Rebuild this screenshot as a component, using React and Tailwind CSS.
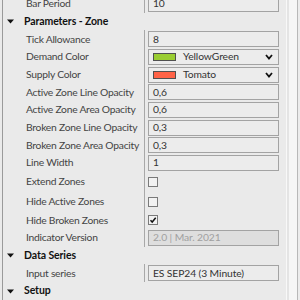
import React from "react";

const font = { fontFamily: 'Lato, "Noto Sans", sans-serif' };

function Tri() {
  return (
    <svg width="7" height="5" viewBox="0 0 7 5" className="shrink-0">
      <path d="M0 0.5 L7 0.5 L3.5 4.5 Z" fill="#111" />
    </svg>
  );
}

function Header({ label, h = "h-[18px]" }) {
  return (
    <div className={`flex items-center ${h} pl-[4px] gap-[10px]`}>
      <Tri />
      <span className="text-[10.5px] font-bold text-[#111] tracking-[-0.1px]">{label}</span>
    </div>
  );
}

function Row({ label, children, h = "h-[18px]", sep = true }) {
  return (
    <div className={`flex ${h}`}>
      <div className="w-[141px] shrink-0 flex items-center pl-[23px] text-[10.3px] tracking-[-0.25px] text-[#444] whitespace-nowrap">
        {label}
      </div>
      <div className={`flex-1 flex items-center pl-[3px] pr-[7px] ${sep ? "border-l border-[#a8a8a8]" : ""}`}>
        {children}
      </div>
    </div>
  );
}

function Box({ children, disabled }) {
  return (
    <div
      className={`w-[131px] h-[16px] border border-[#a3a3a3] flex items-center pl-[4px] text-[10.3px] tracking-[-0.1px] ${
        disabled ? "bg-[#dedede] text-[#a0a0a0]" : "bg-[#ececec] text-[#333]"
      }`}
    >
      {children}
    </div>
  );
}

function ColorBox({ color, name }) {
  return (
    <div className="w-[131px] h-[16px] border border-[#a3a3a3] bg-[#ececec] flex items-center pl-[4px] pr-[5px] text-[10.3px] tracking-[-0.1px] text-[#333]">
      <div className="w-[23px] h-[8px] border border-[#505050] shrink-0" style={{ backgroundColor: color }} />
      <span className="ml-[7px] flex-1">{name}</span>
      <svg width="8" height="6" viewBox="0 0 8 6">
        <path d="M1 1 L4 4.5 L7 1" stroke="#111" strokeWidth="1.8" fill="none" />
      </svg>
    </div>
  );
}

function Check({ checked }) {
  return (
    <div className="w-[10px] h-[10px] border border-[#7a7a7a] bg-[#f2f2f2] flex items-center justify-center">
      {checked && (
        <svg width="8" height="8" viewBox="0 0 8 8">
          <path d="M1.5 4.2 L3.2 6 L6.7 1.8" stroke="#111" strokeWidth="1.5" fill="none" />
        </svg>
      )}
    </div>
  );
}

export default function App() {
  return (
    <div className="w-[300px] h-[300px] overflow-hidden bg-[#eaeaea] flex" style={font}>
      <div className="w-[2px] bg-[#eaeaea] shrink-0" />
      <div className="w-[1px] bg-[#9a9a9a] shrink-0" />
      <div className="flex-1 flex flex-col -mt-[5px]">
        <Row label="Bar Period">
          <Box>10</Box>
        </Row>
        <Header label="Parameters - Zone" />
        <Row label="Tick Allowance">
          <Box>8</Box>
        </Row>
        <Row label="Demand Color">
          <ColorBox color="#9acd32" name="YellowGreen" />
        </Row>
        <Row label="Supply Color">
          <ColorBox color="#ff6347" name="Tomato" />
        </Row>
        <Row label="Active Zone Line Opacity">
          <Box>0,6</Box>
        </Row>
        <Row label="Active Zone Area Opacity">
          <Box>0,6</Box>
        </Row>
        <Row label="Broken Zone Line Opacity">
          <Box>0,3</Box>
        </Row>
        <Row label="Broken Zone Area Opacity">
          <Box>0,3</Box>
        </Row>
        <Row label="Line Width">
          <Box>1</Box>
        </Row>
        <Row label="Extend Zones" h="h-[20px]">
          <Check />
        </Row>
        <Row label="Hide Active Zones" h="h-[20px]">
          <Check />
        </Row>
        <Row label="Hide Broken Zones" h="h-[18px]">
          <Check checked />
        </Row>
        <Row label="Indicator Version">
          <Box disabled>2.0 | Mar. 2021</Box>
        </Row>
        <Header label="Data Series" />
        <Row label="Input series">
          <Box>ES SEP24 (3 Minute)</Box>
        </Row>
        <Header label="Setup" />
      </div>
      <div className="w-[15px] shrink-0 flex">
        <div className="w-[1px] bg-[#f8f8f8]" />
        <div className="w-[2px] bg-[#e4e4e4]" />
        <div className="w-[8px] bg-[#f6f6f6]" />
        <div className="w-[1px] bg-[#b8b8b8]" />
        <div className="w-[3px] bg-[#ececec]" />
      </div>
    </div>
  );
}
